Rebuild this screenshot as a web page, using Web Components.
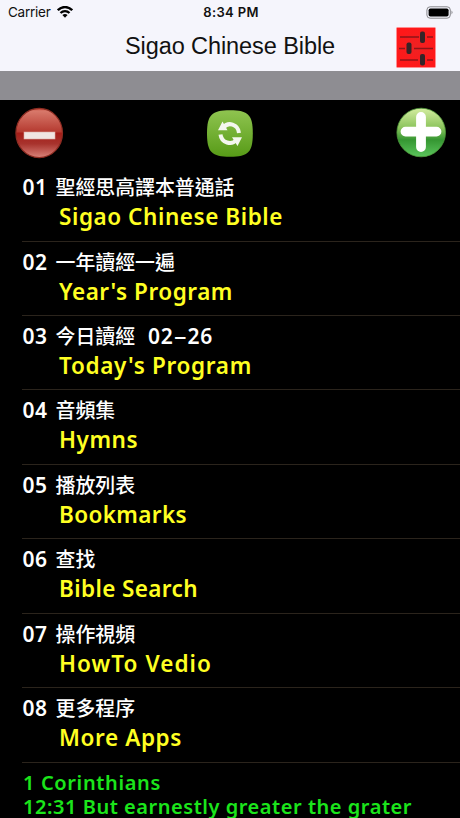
<!DOCTYPE html>
<html lang="zh-Hant">
<head>
<meta charset="utf-8">
<title>Sigao Chinese Bible</title>
<style>
    html, body {
        margin: 0;
        height: 818px;
        overflow: hidden;
        background: #000;
    }
</style>
</head>
<body>
<bible-app></bible-app>
<script>
    class BaseElement extends HTMLElement {
        constructor() {
            super();
            const dom = document.createElement('template');
            dom.innerHTML = this.constructor.template();
            this.attachShadow({ mode: 'open' });
            this.shadowRoot.appendChild(dom.content.cloneNode(true));
        }
    }

    // a single line of text, tracked out to a given width
    class FitText extends BaseElement {
        static template() {
            return `
                <style>
                    :host {
                        display: inline-block;
                        white-space: nowrap;
                    }
                </style>
                <slot></slot>
            `;
        }

        connectedCallback() {
            const target = +this.getAttribute('width');
            const count = [...this.textContent].length;
            const { width } = this.getBoundingClientRect();
            this.style.letterSpacing = `${(target - width) / count}px`;
        }
    }

    class StatusBar extends BaseElement {
        static template() {
            return `
                <style>
                    :host {
                        display: grid;
                        grid-template-columns: 1fr auto 1fr;
                        align-items: center;
                        height: 24px;
                        padding: 0 6px 0 8px;
                        color: #111;
                        font: 13.5px/24px Inter, sans-serif;
                    }
                    .left {
                        display: flex;
                        align-items: center;
                        gap: 6px;
                    }
                    .time {
                        font-weight: 600;
                        font-size: 13px;
                    }
                    .battery {
                        justify-self: end;
                    }
                    svg {
                        display: block;
                    }
                </style>
                <div class="left">
                    <fit-text width="42.5">Carrier</fit-text>
                    <svg width="16" height="12" viewBox="0 0 16 12">
                        <g fill="none" stroke="#000" stroke-width="2.3">
                            <path d="M.8 4.2C5-.1 11-.1 15.200 4.200" />
                            <path d="M3.500 7C6 4.500 10 4.500 12.500 7" />
                        </g>
                        <path d="M5.400 9C7 7.600 9 7.600 10.600 9L8 11.700z" />
                    </svg>
                </div>
                <fit-text class="time" width="55.5">8:34 PM</fit-text>
                <svg class="battery" width="28" height="13" viewBox="0 0 28 13">
                    <rect x=".9" y=".8" width="23.400" height="11.400" rx="3.200" fill="none" stroke="#88888c" />
                    <rect x="2.600" y="2.500" width="20" height="8" rx="1.800" />
                    <path d="M25.500 4.600q2.200 1.900 0 3.800z" fill="#88888c" />
                </svg>
            `;
        }
    }

    class TitleBar extends BaseElement {
        static template() {
            return `
                <style>
                    :host {
                        display: grid;
                        grid-template-columns: 60px 1fr 60px;
                        align-items: center;
                        justify-items: center;
                        height: 47px;
                        padding: 0 10px;
                        box-sizing: border-box;
                        color: #111;
                        font: 23.500px/44px "Liberation Sans", Arial, sans-serif;
                    }
                    svg {
                        grid-column: 3;
                        display: block;
                        margin: -1px 0 0 -9px;
                    }
                    .title {
                        grid-column: 2;
                        height: 47px;
                    }
                </style>
                <div class="title"><slot></slot></div>
                <svg width="40" height="41" viewBox="0 0 40 41">
                    <defs>
                        <radialGradient id="red">
                            <stop offset="0" stop-color="#ee2223" />
                            <stop offset="1" stop-color="#ff1819" />
                        </radialGradient>
                    </defs>
                    <rect x=".5" y=".5" width="39" height="40" rx="1" fill="url(#red)" stroke="#ff8d90" />
                    <path d="M4 10h19M31 10h6M3 21.500h6M18 21.500h19M4 33h18M31 33h6" stroke="#8d1518" stroke-width="1.600" />
                    <g fill="#352427">
                        <rect x="24" y="4.500" width="5" height="11.500" rx="2" />
                        <rect x="10.500" y="15.500" width="5" height="11.500" rx="2" />
                        <rect x="24" y="27" width="5" height="11.500" rx="2" />
                    </g>
                </svg>
            `;
        }
    }

    class ToolBar extends BaseElement {
        static template() {
            return `
                <style>
                    :host {
                        display: flex;
                        justify-content: space-between;
                        height: 67.200px;
                        padding: 7px 13px 0 15px;
                        box-sizing: border-box;
                    }
                    svg {
                        display: block;
                    }
                </style>
                <svg width="49" height="52" viewBox="0 0 49 52">
                    <defs>
                        <linearGradient id="base" x2="0" y2="1">
                            <stop offset="0" stop-color="#bc3526" />
                            <stop offset=".05" stop-color="#d8796b" />
                            <stop offset=".48" stop-color="#b53a30" />
                            <stop offset=".5" stop-color="#a51d18" />
                            <stop offset=".72" stop-color="#a8332d" />
                            <stop offset="1" stop-color="#da837a" />
                        </linearGradient>
                    </defs>
                    <ellipse cx="24.200" cy="26" rx="23.300" ry="24.600" fill="url(#base)" stroke="#8d2c22" stroke-width="1.200" />
                    <rect x="9" y="25" width="31" height="7" fill="#f0e5e2" stroke="#dcaaa4" stroke-width=".6" />
                </svg>
                <svg width="48" height="52" viewBox="0 0 48 52">
                    <defs>
                        <linearGradient id="green" x2="0" y2="1">
                            <stop offset="0" stop-color="#8fc450" />
                            <stop offset="1" stop-color="#579b17" />
                        </linearGradient>
                    </defs>
                    <path d="M24 3.200C42.500 3.200 46.800 8 46.800 26.500S42.500 49.800 24 49.800 1 45 1 26.500 5.500 3.200 24 3.200z" fill="url(#green)" />
                    <g fill="none" stroke="#f4f7ef" stroke-width="4">
                        <path d="M17.500 20.500C22 14.500 32 17 33 26" />
                        <path d="M14.500 27.500C15.500 36 25.500 38.500 30.500 33" />
                    </g>
                    <path d="M16.500 14.500L12 23.300H21.500zM26 30.200H36L31.500 39z" fill="#f4f7ef" />
                </svg>
                <svg width="51" height="52" viewBox="0 0 51 52">
                    <defs>
                        <linearGradient id="plus" x2="0" y2="1">
                            <stop offset="0" stop-color="#d4eda0" />
                            <stop offset=".4" stop-color="#8cc45d" />
                            <stop offset=".65" stop-color="#359632" />
                            <stop offset="1" stop-color="#5bc55c" />
                        </linearGradient>
                    </defs>
                    <circle cx="25.200" cy="25.500" r="24.300" fill="url(#plus)" stroke="#4f993b" stroke-width=".8" />
                    <path d="M25 10v30M9.500 24.600h31" stroke="#fff" stroke-width="9.800" stroke-linecap="round" />
                </svg>
            `;
        }
    }

    class MenuRow extends BaseElement {
        static template() {
            return `
                <style>
                    :host {
                        display: block;
                        height: 74.430px;
                        margin-left: 22px;
                        padding-top: 7px;
                        box-sizing: border-box;
                        border-bottom: 1px solid #2b241c;
                    }
                    .first {
                        display: flex;
                        align-items: baseline;
                        height: 26px;
                        color: #fff;
                        font: 500 19.900px/26px "Noto Sans", "Noto Sans CJK TC", sans-serif;
                        white-space: pre;
                    }
                    .number {
                        width: 33px;
                        padding-left: .5px;
                        font-weight: 600;
                        font-size: 21px;
                        letter-spacing: .4px;
                    }
                    .second {
                        height: 32px;
                        padding-left: 37px;
                        color: #ff2;
                        font: 600 22.500px/33px "Noto Sans", "Open Sans", sans-serif;
                    }
                </style>
                <div class="first"><span class="number"><slot name="number"></slot></span><slot name="chinese"></slot></div>
                <div class="second"><slot></slot></div>
            `;
        }
    }

    class DailyVerse extends BaseElement {
        static template() {
            return `
                <style>
                    :host {
                        display: flex;
                        flex-direction: column;
                        align-items: flex-start;
                        padding: 8px 0 0 23px;
                        color: #1be51b;
                        font: 600 20px/24px "Noto Sans", "Open Sans", sans-serif;
                    }
                </style>
                <fit-text width="138">1 Corinthians</fit-text>
                <fit-text width="389">12:31 But earnestly greater the grater</fit-text>
            `;
        }
    }

    const items = [
        ['聖經思高譯本普通話', 'Sigao Chinese Bible', 224],
        ['一年讀經一遍', "Year's Program", 174],
        ['今日讀經<span class="date">02<i>-</i>26</span>', "Today's Program", 193],
        ['音頻集', 'Hymns', 79],
        ['播放列表', 'Bookmarks', 128],
        ['查找', 'Bible Search', 139],
        ['操作視頻', 'HowTo Vedio', 153],
        ['更多程序', 'More Apps', 123],
    ];

    class BibleApp extends BaseElement {
        static template() {
            const rows = items.map(([chinese, english, width], index) => `
                <menu-row>
                    <span slot="number">0${index + 1}</span>
                    <span slot="chinese">${chinese}</span>
                    <fit-text width="${width}">${english}</fit-text>
                </menu-row>
            `);
            return `
                <style>
                    :host {
                        display: block;
                        width: 460px;
                        height: 818px;
                        overflow: hidden;
                        background: #000;
                    }
                    header {
                        background: #f5f5fc;
                    }
                    .band {
                        height: 29px;
                        background: #8e8d92;
                    }
                    .date {
                        margin-left: 13px;
                        font-weight: 600;
                        font-size: 21px;
                        letter-spacing: .7px;
                    }
                    .date i {
                        display: inline-block;
                        width: 14px;
                        text-align: center;
                        font-style: normal;
                        font-weight: 500;
                        transform: scaleX(2);
                    }
                </style>
                <header>
                    <status-bar></status-bar>
                    <title-bar><fit-text width="210">Sigao Chinese Bible</fit-text></title-bar>
                </header>
                <div class="band"></div>
                <tool-bar></tool-bar>
                <main>${rows.join('')}</main>
                <daily-verse></daily-verse>
            `;
        }
    }

    customElements.define('status-bar', StatusBar);
    customElements.define('title-bar', TitleBar);
    customElements.define('tool-bar', ToolBar);
    customElements.define('menu-row', MenuRow);
    customElements.define('daily-verse', DailyVerse);
    customElements.define('bible-app', BibleApp);
    // last, so that every text is already laid out in its final font
    customElements.define('fit-text', FitText);
</script>
</body>
</html>
